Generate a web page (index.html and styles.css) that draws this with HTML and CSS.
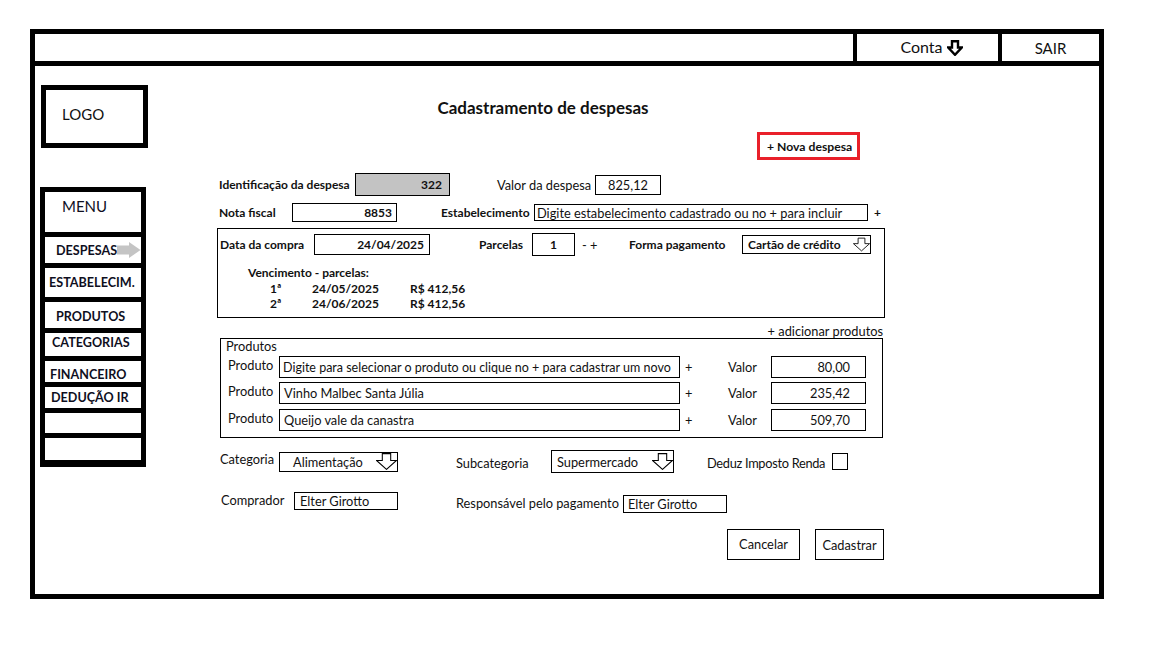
FILE: index.html
```html
<!DOCTYPE html>
<html lang="pt-BR">
<head>
<meta charset="utf-8">
<title>Cadastramento de despesas</title>
<link rel="stylesheet" href="styles.css">
</head>
<body>
<div class="frame">
  <div class="topbar">
    <div class="tb-blank"></div>
    <div class="tb-conta">Conta <svg class="conta-arrow" viewBox="0 0 16 16" width="16" height="16"><polygon points="5,1.2 11,1.2 11,7.5 14.8,7.5 8,14.8 1.2,7.5 5,7.5" fill="#fff" stroke="#000" stroke-width="2.4"/></svg></div>
    <div class="tb-sair">SAIR</div>
  </div>
  <div class="content">
    <aside class="sidebar">
      <div class="logo">LOGO</div>
      <nav class="menu">
        <div class="mi mi-title">MENU</div>
        <div class="mi mi-desp">DESPESAS<svg class="gray-arrow" viewBox="0 0 24 16" width="24" height="16"><polygon points="0,3.5 12,3.5 12,0 23.5,8 12,16 12,12.5 0,12.5" fill="#c4c4c4"/></svg></div>
        <div class="mi mi-est">ESTABELECIM.</div>
        <div class="mi mi-prod">PRODUTOS</div>
        <div class="mi mi-cat">CATEGORIAS</div>
        <div class="mi mi-fin">FINANCEIRO</div>
        <div class="mi mi-ded">DEDUÇÃO IR</div>
        <div class="mi mi-b1"></div>
        <div class="mi mi-b2"></div>
      </nav>
    </aside>
    <main class="main">
      <h1 class="title">Cadastramento de despesas</h1>
      <div class="nova">+ Nova despesa</div>
      <div class="form">
        <div class="row row1">
          <span class="lbl b w-ident">Identificação da despesa</span>
          <span class="box gray b r w-id">322</span>
          <span class="lbl w-valor">Valor da despesa</span>
          <span class="box c w-val">825,12</span>
        </div>
        <div class="row row2">
          <span class="lbl b w-nf">Nota fiscal</span>
          <span class="box b r w-nfbox">8853</span>
          <span class="lbl b w-est">Estabelecimento</span>
          <span class="box w-estbox">Digite estabelecimento cadastrado ou no + para incluir</span>
          <span class="plus b">+</span>
        </div>
        <section class="compra">
          <div class="row row3">
            <span class="lbl b w-data">Data da compra</span>
            <span class="box b r w-databox">24/04/2025</span>
            <span class="lbl b w-parc">Parcelas</span>
            <span class="box b c w-parcbox">1</span>
            <span class="lbl w-pm">- +</span>
            <span class="lbl b w-forma">Forma pagamento</span>
            <span class="box sel b w-formabox">Cartão de crédito<svg class="dn" viewBox="0 0 20 16" width="17" height="17"><polygon points="6,0.5 14,0.5 14,7 19.5,7 10,15.5 0.5,7 6,7" fill="#fff" stroke="#000" stroke-width="1"/></svg></span>
          </div>
          <div class="venc b">Vencimento - parcelas:</div>
          <div class="parc b"><span class="p-n">1ª</span><span class="p-d">24/05/2025</span><span>R$ 412,56</span></div>
          <div class="parc b"><span class="p-n">2ª</span><span class="p-d">24/06/2025</span><span>R$ 412,56</span></div>
        </section>
        <div class="add">+ adicionar produtos</div>
        <section class="produtos">
          <div class="prod-title">Produtos</div>
          <div class="prow">
            <span class="plbl">Produto</span>
            <span class="box pin pin-long">Digite para selecionar o produto ou clique no + para cadastrar um novo</span>
            <span class="pplus">+</span>
            <span class="pval">Valor</span>
            <span class="box vbox">80,00</span>
          </div>
          <div class="prow">
            <span class="plbl">Produto</span>
            <span class="box pin">Vinho Malbec Santa Júlia</span>
            <span class="pplus">+</span>
            <span class="pval">Valor</span>
            <span class="box vbox">235,42</span>
          </div>
          <div class="prow">
            <span class="plbl">Produto</span>
            <span class="box pin">Queijo vale da canastra</span>
            <span class="pplus">+</span>
            <span class="pval">Valor</span>
            <span class="box vbox">509,70</span>
          </div>
        </section>
        <div class="row row-cat">
          <span class="lbl top w-cat">Categoria</span>
          <span class="box sel w-catbox">Alimentação<svg class="dn" viewBox="0 0 20 16" width="21" height="17"><polygon points="6,0.5 14,0.5 14,7 19.5,7 10,15.5 0.5,7 6,7" fill="#fff" stroke="#000" stroke-width="1"/></svg></span>
          <span class="lbl w-sub">Subcategoria</span>
          <span class="box sel w-subbox">Supermercado<svg class="dn" viewBox="0 0 20 16" width="21" height="17"><polygon points="6,0.5 14,0.5 14,7 19.5,7 10,15.5 0.5,7 6,7" fill="#fff" stroke="#000" stroke-width="1"/></svg></span>
          <span class="lbl w-ded">Deduz Imposto Renda</span>
          <span class="box chk"></span>
        </div>
        <div class="row row-comp">
          <span class="lbl top w-comp">Comprador</span>
          <span class="box top w-compbox">Elter Girotto</span>
          <span class="lbl w-resp">Responsável pelo pagamento</span>
          <span class="box w-respbox">Elter Girotto</span>
        </div>
        <div class="row row-btn">
          <span class="btn btn-cancel">Cancelar</span>
          <span class="btn btn-cad">Cadastrar</span>
        </div>
      </div>
    </main>
  </div>
</div>
</body>
</html>
```
FILE: styles.css
```css
html, body { margin: 0; padding: 0; background: #fff; }
body {
  font-family: Lato, "Liberation Sans", sans-serif;
  color: #111;
  font-size: 12.8px;
}
.frame {
  margin: 29px 0 0 30px;
  width: 1074px;
  height: 570px;
  border: 5px solid #000;
  box-sizing: border-box;
  display: flex;
  flex-direction: column;
}
.topbar {
  display: flex;
  height: 32px;
  border-bottom: 5px solid #000;
  box-sizing: border-box;
}
.tb-blank { flex: 1; }
.tb-conta {
  width: 145px;
  border-left: 4px solid #000;
  box-sizing: border-box;
  display: flex;
  align-items: center;
  justify-content: center;
  padding-left: 8px;
  padding-bottom: 3px;
  font-size: 16px;
}
.conta-arrow { margin-left: 4px; margin-top: 3px; }
.tb-sair {
  width: 101px;
  border-left: 4px solid #000;
  box-sizing: border-box;
  display: flex;
  align-items: center;
  justify-content: center;
  font-size: 15px;
  padding-top: 1px;
}
.content { display: flex; flex: 1; }
.sidebar {
  width: 113px;
  padding-left: 5px;
  box-sizing: border-box;
  flex-shrink: 0;
}
.logo {
  margin: 19px 0 0 1px;
  width: 107px;
  height: 63px;
  border: 5px solid #000;
  box-sizing: border-box;
  font-size: 15px;
  padding: 15px 0 0 16px;
}
.menu {
  margin-top: 39px;
  width: 106px;
  background: #000;
  padding: 5px 5px 7px 5px;
  box-sizing: border-box;
  display: flex;
  flex-direction: column;
  gap: 5px;
}
.mi {
  background: #fff;
  font-weight: bold;
  font-size: 12.6px;
  display: flex;
  align-items: center;
  color: #0f0f1e;
  white-space: nowrap;
}
.mi-title { height: 40px; font-weight: normal; font-size: 15px; align-items: flex-start; padding: 5px 0 0 17px; box-sizing: border-box; }
.mi-desp { height: 26px; padding-left: 11px; justify-content: space-between; }
.gray-arrow { margin-right: 0; flex-shrink: 0; }
.mi-est { height: 29px; padding-left: 4px; }
.mi-prod { height: 26px; padding-left: 11px; padding-top: 3px; box-sizing: border-box; }
.mi-cat { height: 23px; padding-left: 7px; padding-bottom: 4px; box-sizing: border-box; }
.mi-fin { height: 21px; padding-left: 5px; padding-top: 5px; box-sizing: border-box; }
.mi-ded { height: 21px; padding-left: 6px; }
.mi-b1 { height: 20px; }
.mi-b2 { height: 22px; }

.main { flex: 1; }
.title {
  margin: 32px 0 0 0;
  width: 790px;
  text-align: center;
  font-size: 17px;
  line-height: 20px;
  font-weight: bold;
}
.nova {
  margin: 14px 0 0 609px;
  width: 103px;
  height: 28px;
  border: 3px solid #e9202a;
  box-sizing: border-box;
  font-weight: bold;
  font-size: 12.2px;
  line-height: 23px;
  padding-left: 7px;
  white-space: nowrap;
}
.form { margin-left: 69px; width: 668px; }
.row { display: flex; align-items: center; }
.lbl { white-space: nowrap; flex-shrink: 0; box-sizing: border-box; }
.b { font-weight: bold; font-size: 12px; }
.box {
  border: 1px solid #000;
  box-sizing: border-box;
  white-space: nowrap;
  overflow: hidden;
  flex-shrink: 0;
  display: flex;
  align-items: center;
}
.r { justify-content: flex-end; }
.c { justify-content: center; }
.gray { background: #c3c3c3; }
.top { align-self: flex-start; }

.row1 { margin-top: 13px; height: 23px; }
.w-ident { width: 138px; padding-left: 2px; }
.w-id { width: 95px; height: 23px; padding-right: 7px; }
.w-valor { width: 98px; margin-left: 47px; }
.w-val { width: 66px; height: 20px; }

.row2 { margin-top: 7px; height: 19px; }
.w-nf { width: 75px; padding-left: 2px; }
.w-nfbox { width: 105px; height: 19px; padding-right: 4px; }
.w-est { width: 93px; margin-left: 44px; }
.w-estbox { width: 334px; height: 17px; padding-left: 2px; }
.plus { margin-left: 6px; }

.compra {
  margin-top: 6px;
  width: 668px;
  height: 90px;
  border: 1px solid #000;
  box-sizing: border-box;
  padding: 4px 0 0 2px;
}
.row3 { height: 23px; }
.w-data { width: 94px; }
.w-databox { width: 116px; height: 21px; padding-right: 5px; }
.w-parc { width: 53px; margin-left: 49px; }
.w-parcbox { width: 43px; height: 23px; }
.w-pm { width: 47px; margin-left: 7px; }
.w-forma { width: 113px; }
.w-formabox { width: 129px; height: 19px; padding-left: 5px; justify-content: space-between; align-items: flex-start; line-height: 17px; }
.w-formabox .dn { margin-right: 0; }
.venc { margin: 9px 0 0 28px; line-height: 16px; }
.parc { display: flex; margin-left: 50px; line-height: 15px; }
.p-n { width: 42px; }
.p-d { width: 98px; }

.add { margin-top: 6px; width: 666px; text-align: right; line-height: 14px; }
.produtos {
  margin-left: 3px;
  width: 663px;
  height: 100px;
  border: 1px solid #000;
  box-sizing: border-box;
}
.prod-title { padding-left: 5px; line-height: 14px; }
.prow { display: flex; align-items: center; height: 22px; margin-top: 3px; }
.prow + .prow { margin-top: 4px; }
.prow:last-child { margin-top: 5px; }
.plbl { width: 51px; margin-left: 7px; align-self: flex-start; line-height: 18px; }
.pin { width: 401px; height: 22px; padding-left: 4px; }
.pin-long { font-size: 12.5px; padding-left: 3px; }
.pplus { width: 48px; padding-left: 5px; box-sizing: border-box; }
.pval { width: 43px; }
.vbox { width: 95px; height: 22px; justify-content: flex-end; padding-right: 15px; }

.row-cat { margin-top: 12px; height: 23px; }
.w-cat { width: 59px; margin-left: 3px; line-height: 18px; }
.w-catbox { width: 119px; height: 20px; padding-left: 13px; justify-content: space-between; }
.w-sub { width: 95px; margin-left: 58px; padding-top: 2px; }
.w-subbox { width: 123px; height: 23px; padding-left: 5px; justify-content: space-between; }
.w-ded { width: 125px; margin-left: 33px; padding-top: 2px; letter-spacing: -0.3px; }
.chk { width: 16px; height: 17px; }

.row-comp { margin-top: 19px; height: 21px; }
.w-comp { width: 73px; margin-left: 4px; line-height: 16px; }
.w-compbox { width: 104px; height: 18px; padding-left: 5px; }
.w-resp { width: 167px; margin-left: 58px; padding-top: 1px; }
.w-respbox { width: 104px; height: 18px; padding-left: 4px; align-self: flex-end; }

.row-btn { margin-top: 16px; height: 31px; }
.btn {
  border: 1px solid #000;
  box-sizing: border-box;
  height: 31px;
  display: flex;
  align-items: center;
  justify-content: center;
}
.btn-cancel { margin-left: 510px; width: 73px; padding-bottom: 2px; }
.btn-cad { margin-left: 15px; width: 69px; padding-top: 1px; }
```
